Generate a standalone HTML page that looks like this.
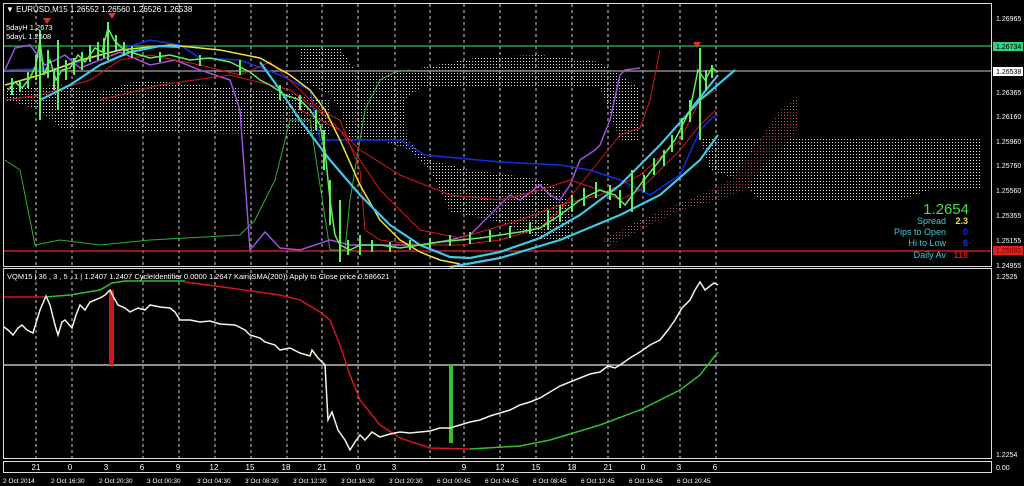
<!DOCTYPE html>
<html><head><meta charset="utf-8"><style>
html,body{margin:0;padding:0;background:#000;width:1024px;height:486px;overflow:hidden}
svg{display:block}
text{font-family:"Liberation Sans",sans-serif}
</style></head><body>
<svg width="1024" height="486" viewBox="0 0 1024 486" xmlns="http://www.w3.org/2000/svg">
<defs>
<pattern id="dw" width="3" height="3" patternUnits="userSpaceOnUse"><rect x="1" y="1" width="1" height="1" fill="#ddd"/></pattern>
<pattern id="dp" width="3" height="3" patternUnits="userSpaceOnUse"><rect x="1" y="1" width="1" height="1" fill="#b55"/></pattern>
</defs>
<rect width="1024" height="486" fill="#000"/>
<g stroke="#ccc" stroke-width="1" stroke-dasharray="3,3" fill="none">
<path d="M36 4V266M72 4V266M143 4V266M179 4V266M215 4V266M251 4V266M287 4V266M322 4V266M358 4V266M395 4V266M430 4V266M464 4V266M500 4V266M536 4V266M572 4V266M608 4V266M643 4V266M680 4V266M716 4V266"/>
<path d="M36 270V458M72 270V458M143 270V458M179 270V458M215 270V458M251 270V458M287 270V458M322 270V458M358 270V458M395 270V458M430 270V458M464 270V458M500 270V458M536 270V458M572 270V458M608 270V458M643 270V458M680 270V458M716 270V458"/>
</g>
<!-- clouds -->
<path d="M5 88 L60 85 L100 92 L140 80 L200 85 L260 90 L300 95 L330 100 L330 135 L200 133 L100 130 L60 128 L40 110 L5 100Z" fill="url(#dw)"/>
<path d="M300 45 L340 48 L355 70 L420 68 L480 57 L540 55 L600 62 L635 85 L640 90 L640 140 L620 140 L600 88 L500 88 L420 88 L405 100 L407 140 L430 160 L470 170 L510 175 L540 180 L560 190 L570 205 L570 240 L540 240 L500 222 L450 212 L440 190 L430 170 L410 150 L380 140 L350 140 L340 110 L330 95 L300 80Z" fill="url(#dw)"/>
<path d="M700 138 L980 138 L980 190 L930 190 L900 200 L760 200 L740 180 L710 170Z" fill="url(#dw)"/>
<path d="M600 240 L640 220 L700 195 L730 180 L760 140 L780 110 L798 96 L798 130 L780 150 L760 170 L745 190 L720 200 L680 210 L640 230 L610 245Z" fill="url(#dp)"/>
<line x1="3" y1="46" x2="992" y2="46" stroke="#2e9c4e" stroke-width="1.5"/>
<line x1="3" y1="71" x2="992" y2="71" stroke="#888" stroke-width="1.5"/>
<line x1="3" y1="251" x2="992" y2="251" stroke="#c0202a" stroke-width="1.5"/>
<polyline fill="none" stroke="#2fae2f" stroke-width="1" points="5,160 20,170 35,245 60,240 100,245 150,240 240,235 255,220 275,180 290,120 310,120 330,250 345,250 350,200 365,110 380,80 395,72 410,70"/>
<polyline fill="none" stroke="#a050e0" stroke-width="1.5" points="5,70 15,48 30,45 45,65 65,55 80,68 100,60 120,52 150,65 175,60 200,70 230,80 240,110 245,180 250,250 265,232 280,248 300,250 330,240 350,245 380,245 420,245 450,240 470,235 490,215 510,195 520,200 540,185 550,195 560,200 570,185 580,160 595,150 600,145 610,120 620,75 625,70 640,68"/>
<polyline fill="none" stroke="#1030e0" stroke-width="1.5" points="5,70 60,68 150,40 180,45 200,58 240,60 280,75 310,90 320,140 360,140 400,140 425,155 500,162 560,165 590,170 620,180 640,190 650,195 680,175 700,130 712,118 718,115"/>
<g fill="none" stroke="#d01818" stroke-width="1">
<polyline points="5,100 40,95 90,80 120,60 150,55 200,65 240,75 270,62 300,90 320,110 340,120 360,170 365,230 380,240 420,245 460,245 500,240 540,228 560,210 580,185 600,160 620,135 640,128 650,100 660,50"/>
<polyline points="100,100 160,85 230,75 290,90 330,120 360,150 400,175 450,195 500,200 540,190 570,180 600,190 620,200 640,190 660,170 680,150 700,125 716,110"/>
<polyline points="300,110 340,130 380,190 420,230 460,238 520,220 560,205 600,195 640,175 680,140 700,100 716,90"/>
</g>
<polyline fill="none" stroke="#f0e040" stroke-width="1.5" points="5,85 40,75 80,60 120,50 170,45 220,50 260,58 290,75 310,90 325,110 340,140 360,185 380,220 400,240 420,252 440,260 460,264"/>
<g fill="none" stroke="#40c8e8" stroke-width="2.2">
<polyline points="40,100 70,85 100,65 130,52 160,46 180,47"/>
<polyline points="260,62 280,90 300,120 330,160 360,195 390,225 420,245 450,257 470,258 500,252 540,238 580,215 620,185 660,145 700,100 735,70"/>
<polyline points="450,267 500,258 560,240 620,215 660,195 700,160 718,135"/>
<polyline points="690,110 718,75"/>
</g>
<!-- price -->
<polyline fill="none" stroke="#5ef05e" stroke-width="1.5" points="8,90 15,82 22,88 30,78 36,65 40,40 44,75 50,60 56,80 62,70 70,68 78,55 85,62 95,48 102,52 108,28 114,40 122,48 130,52 140,55 150,58 170,55 190,60 210,58 230,62 250,72 260,80 270,85 285,95 300,100 310,110 320,125 325,150 330,200 335,235 340,245 350,250 360,245 380,245 400,248 420,245 440,242 460,240 480,238 500,235 520,232 540,228 560,215 580,200 600,190 615,195 625,205 640,185 660,160 675,140 690,110 698,70 705,80 712,68 718,72"/>
<g stroke="#5ef05e" stroke-width="2">
<path d="M12 78V95M20 80V92M28 72V88M36 55V80M40 30V120M48 50V78M54 70V90M58 40V110M66 60V80M74 58V75M82 52V70M90 45V62M98 42V60M104 38V58M108 22V60M116 35V52M124 42V56M132 46V58M160 52V62M200 55V66M240 60V75M280 85V100M300 95V110M316 110V130M324 130V170M330 180V225M340 200V262M348 240V255M360 235V255M372 240V252M390 242V252M410 240V250M430 238V248M450 235V246M470 232V244M490 230V242M510 226V238M530 222V234M548 210V230M560 205V222M572 195V212M584 188V206M596 182V198M610 185V200M620 190V208M632 170V212M644 175V192M654 158V175M664 150V166M672 135V152M682 118V140M690 100V122M700 48V140M706 70V90M712 65V78"/>
</g>
<g fill="#e03020"><path d="M43 18h8l-4 6z"/><path d="M108 13h8l-4 6z"/><path d="M693 42h8l-4 6z"/></g>
<rect x="3.5" y="3.5" width="988" height="263" fill="none" stroke="#ddd" stroke-width="1"/>
<text x="6" y="12" fill="#fff" font-size="8">▼ EURUSD,M15  1.26552 1.26560 1.26526 1.26538</text>
<text x="6" y="30" fill="#fff" font-size="7.5">5dayH 1.2673</text>
<text x="6" y="39" fill="#fff" font-size="7.5">5dayL 1.2508</text>
<text x="969" y="214" fill="#40e040" font-size="15" text-anchor="end">1.2654</text>
<g font-size="9" fill="#40c8d8" text-anchor="end">
<text x="946" y="224">Spread</text><text x="946" y="235">Pips to Open</text><text x="946" y="246">Hi to Low</text><text x="946" y="258">Daily Av</text></g>
<g font-size="9" font-weight="bold" text-anchor="end">
<text x="968" y="224" fill="#f0e040">2.3</text><text x="968" y="235" fill="#1030e0">0</text><text x="968" y="246" fill="#1030e0">6</text><text x="968" y="258" fill="#d01818">118</text></g>
<g font-size="7" fill="#fff">
<text x="996" y="21">1.26965</text><text x="996" y="95">1.26365</text><text x="996" y="119">1.26160</text><text x="996" y="144">1.25960</text><text x="996" y="168">1.25760</text><text x="996" y="193">1.25560</text><text x="996" y="218">1.25355</text><text x="996" y="243">1.25155</text><text x="996" y="268">1.24955</text>
</g>
<rect x="993" y="42" width="30" height="9" fill="#30d080"/><text x="996" y="49" font-size="7" fill="#000">1.26734</text>
<rect x="993" y="67" width="30" height="9" fill="#fff"/><text x="996" y="74" font-size="7" fill="#000">1.26538</text>
<rect x="993" y="246" width="30" height="9" fill="#e02020"/><text x="996" y="253" font-size="7" fill="#800">1.25080</text>
<!-- lower panel -->
<rect x="3.5" y="268.5" width="988" height="190" fill="none" stroke="#ddd" stroke-width="1"/>
<line x1="3" y1="365" x2="992" y2="365" stroke="#bbb" stroke-width="1.5"/>
<text x="7" y="279" font-size="7.5" fill="#fff">VQM15 |  36 , 3 , 5 , 1  |  1.2407 1.2407  CycleIdentifier 0.0000 1.2647  Kairi(SMA(200)) Apply to Close price 0.586621</text>
<polyline fill="none" stroke="#d01818" stroke-width="1.5" points="4,297 45,297"/>
<polyline fill="none" stroke="#30c030" stroke-width="1.5" points="45,297 70,295 100,290 112,283 125,281 185,281"/>
<polyline fill="none" stroke="#d01818" stroke-width="1.5" points="185,282 230,288 280,295 300,300 320,312 330,320 340,345 350,375 360,400 380,425 400,438 430,448 470,449"/>
<polyline fill="none" stroke="#30c030" stroke-width="1.5" points="470,449 520,446 550,440 600,425 640,410 680,390 700,375 718,352"/>
<rect x="109" y="290" width="5" height="75" fill="#d01818"/>
<rect x="449" y="365" width="4" height="78" fill="#30c030"/>
<polyline fill="none" stroke="#f4f4e0" stroke-width="1.5" points="4,327 8,330 13,335 18,328 22,325 27,330 33,333 40,310 46,296 50,305 55,325 58,335 62,322 65,320 72,328 76,315 80,305 85,310 90,302 95,300 100,298 105,295 110,290 114,298 118,305 125,308 130,312 138,308 145,310 150,305 160,307 170,308 175,312 180,320 190,320 200,322 210,321 220,324 235,325 245,330 250,335 260,338 265,342 275,345 280,350 290,348 300,353 310,356 312,350 318,358 325,365 328,420 332,412 338,430 345,440 350,450 355,442 360,435 365,440 372,432 380,437 390,434 400,432 410,433 420,432 430,431 440,428 450,428 460,425 470,422 480,420 490,416 500,413 510,410 520,405 530,402 540,398 550,392 560,386 570,382 580,378 590,374 600,372 608,366 615,368 620,365 630,358 640,352 650,345 660,340 668,330 675,320 682,308 690,300 695,290 700,282 705,290 710,286 714,283 718,285"/>
<text x="996" y="279" font-size="7" fill="#fff">1.2525</text>
<text x="996" y="457" font-size="7" fill="#fff">1.2254</text>
<rect x="3.5" y="461.5" width="988" height="11" fill="none" stroke="#ddd" stroke-width="1"/>
<g font-size="8" fill="#fff" text-anchor="middle">
<text x="36" y="470">21</text><text x="70" y="470">0</text><text x="106" y="470">3</text><text x="142" y="470">6</text><text x="178" y="470">9</text><text x="214" y="470">12</text><text x="250" y="470">15</text><text x="286" y="470">18</text><text x="322" y="470">21</text><text x="358" y="470">0</text><text x="394" y="470">3</text><text x="464" y="470">9</text><text x="500" y="470">12</text><text x="536" y="470">15</text><text x="572" y="470">18</text><text x="608" y="470">21</text><text x="643" y="470">0</text><text x="679" y="470">3</text><text x="715" y="470">6</text>
</g>
<text x="996" y="470" font-size="7" fill="#fff">0.00</text>
<g font-size="6.5" fill="#fff">
<text x="3" y="483">2 Oct 2014</text><text x="51" y="483">2 Oct 16:30</text><text x="99" y="483">2 Oct 20:30</text><text x="147" y="483">3 Oct 00:30</text><text x="197" y="483">3 Oct 04:30</text><text x="245" y="483">3 Oct 08:30</text><text x="293" y="483">3 Oct 12:30</text><text x="341" y="483">3 Oct 16:30</text><text x="389" y="483">3 Oct 20:30</text><text x="437" y="483">6 Oct 00:45</text><text x="485" y="483">6 Oct 04:45</text><text x="533" y="483">6 Oct 08:45</text><text x="581" y="483">6 Oct 12:45</text><text x="629" y="483">6 Oct 16:45</text><text x="677" y="483">6 Oct 20:45</text>
</g>
</svg>
</body></html>
